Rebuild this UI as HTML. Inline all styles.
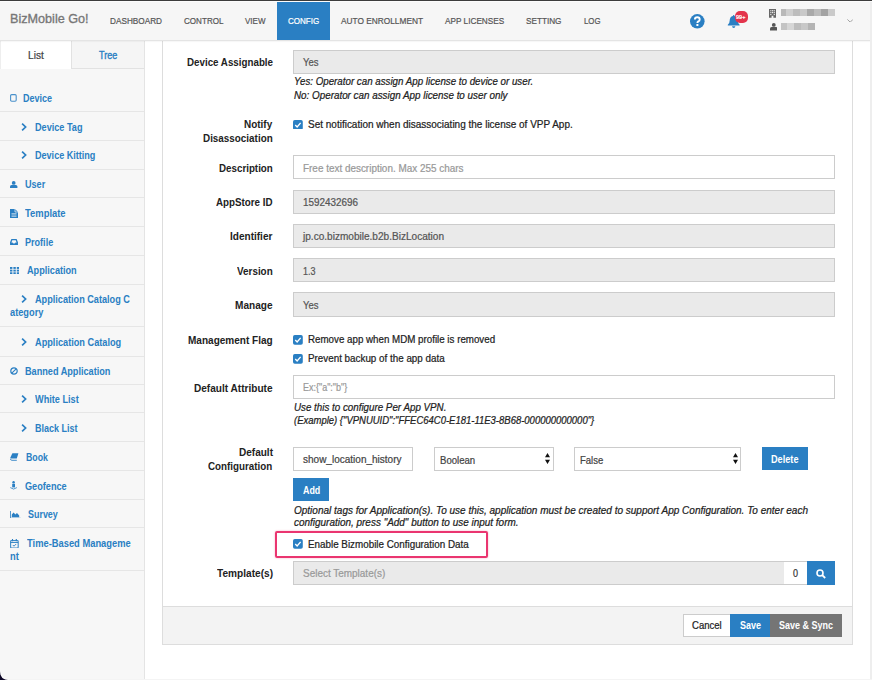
<!DOCTYPE html>
<html>
<head>
<meta charset="utf-8">
<style>
*{box-sizing:border-box;margin:0;padding:0}
html,body{width:872px;height:680px;overflow:hidden;background:#fff;font-family:"Liberation Sans",sans-serif;font-size:11px;color:#333}
#win{position:absolute;left:0;top:0;width:872px;height:680px;overflow:hidden;background:#fff}
.a{position:absolute;display:block}
.t{position:absolute;white-space:pre;line-height:1;transform-origin:0 0;z-index:7;-webkit-text-stroke:0.22px currentColor}
#topline{position:absolute;left:0;top:0;width:872px;height:1px;background:#3c3c3c;z-index:8}
#nav{position:absolute;left:0;top:0;width:872px;height:41px;background:#f6f6f6;border-bottom:1px solid #e4e4e4;z-index:5;box-shadow:0 1px 1px rgba(0,0,0,.03)}
#act{position:absolute;left:277px;top:1px;width:53px;height:39px;background:#2a7fc3}
#side{position:absolute;left:0;top:41px;width:145px;height:639px;background:#f7f7f7;border-right:1px solid #e4e4e4}
#tabL{position:absolute;left:0;top:0;width:72px;height:28px;background:#fff;border-left:1px solid #eee}
#tabT{position:absolute;left:71px;top:0;width:73px;height:28px;background:#f5f5f5;border-left:1px solid #e2e2e2;border-bottom:1px solid #e2e2e2}
.sep{position:absolute;left:0;width:144px;height:1px;background:#e6e6e6}
#panel{position:absolute;left:162px;top:30px;width:691px;height:615px;border:1px solid #ddd;background:#fff}
#foot{position:absolute;left:163px;top:606px;width:689px;height:38px;background:#f3f3f3;border-top:1px solid #ddd}
.in{position:absolute;border:1px solid #ccc}
.in.g{background:#eaeaea}
.in.w{background:#fff}
.btn{position:absolute;background:#2a7fc3}
.mos i{display:block;float:left;height:100%}
#sb{position:absolute;left:870px;top:2px;width:2px;height:678px;background:#eeeeee;z-index:8}
#pink{position:absolute;left:274.5px;top:531px;width:213.5px;height:27px;border:2px solid #ea3570;border-radius:2px;box-shadow:0 0 2px rgba(234,53,112,.45)}
</style>
</head>
<body>
<div id="win">
<div id="topline"></div>
<div id="nav"><div id="act"></div></div>

<svg class="a" style="left:690.2px;top:14px;z-index:6" width="14.6" height="14.6" viewBox="0 0 14.6 14.6"><circle cx="7.3" cy="7.3" r="7.3" fill="#2a7fc3"/><path d="M4.9 5.6 Q4.9 3.3 7.3 3.3 Q9.7 3.3 9.7 5.4 Q9.7 6.7 8.3 7.4 Q7.4 7.9 7.4 8.9" fill="none" stroke="#fff" stroke-width="1.9"/><rect x="6.4" y="10" width="2" height="2" fill="#fff"/></svg>
<svg class="a" style="left:726.7px;top:15px;z-index:6" width="13.4" height="13" viewBox="0 0 13.4 13"><path d="M6.7 0 Q7.5 0 7.5 0.9 Q10.7 1.7 10.7 5.6 Q10.7 8.6 12.6 9.8 V10.6 H0.8 V9.8 Q2.7 8.6 2.7 5.6 Q2.7 1.7 5.9 0.9 Q5.9 0 6.7 0 Z" fill="#2a7fc3"/><path d="M5 11.2 H8.4 Q8.2 13 6.7 13 Q5.2 13 5 11.2 Z" fill="#2a7fc3"/></svg>
<div class="a" style="left:734.5px;top:11.3px;width:13px;height:11.6px;border-radius:5px;background:#e3344c;z-index:6"></div>
<svg class="a" style="left:769px;top:8.8px;z-index:6" width="7" height="8.8" viewBox="0 0 7 8.8"><path d="M0 0 H7 V8.8 H4.4 V6.8 H2.6 V8.8 H0 Z" fill="#666"/><g fill="#f8f8f8"><rect x="1.3" y="1.2" width="1.1" height="1.1"/><rect x="3" y="1.2" width="1.1" height="1.1"/><rect x="4.7" y="1.2" width="1.1" height="1.1"/><rect x="1.3" y="3.1" width="1.1" height="1.1"/><rect x="3" y="3.1" width="1.1" height="1.1"/><rect x="4.7" y="3.1" width="1.1" height="1.1"/><rect x="1.3" y="5" width="1.1" height="1.1"/><rect x="4.7" y="5" width="1.1" height="1.1"/></g></svg>
<svg class="a" style="left:769.5px;top:23px;z-index:6" width="7.6" height="7.6" viewBox="0 0 7.6 7.6"><circle cx="3.8" cy="1.9" r="1.9" fill="#555"/><path d="M0 7.6 V5.6 Q0 4 1.6 4 H6 Q7.6 4 7.6 5.6 V7.6 Z" fill="#555"/></svg>
<div class="a mos" style="left:781px;top:9.3px;width:54px;height:6.8px;z-index:6"><i style="width:5px;background:#b9b9b9"></i><i style="width:7px;background:#cfcfcf"></i><i style="width:7px;background:#bdbdbd"></i><i style="width:7px;background:#c9c9c9"></i><i style="width:7px;background:#a9a9a9"></i><i style="width:7px;background:#bcbcbc"></i><i style="width:7px;background:#a3a3a3"></i><i style="width:7px;background:#cacaca"></i></div>
<div class="a mos" style="left:781px;top:23px;width:34px;height:7px;z-index:6"><i style="width:6px;background:#c4c4c4"></i><i style="width:7px;background:#d6d6d6"></i><i style="width:7px;background:#bdbdbd"></i><i style="width:7px;background:#c8c8c8"></i><i style="width:7px;background:#b4b4b4"></i></div>
<svg class="a" style="left:847px;top:18.6px;z-index:6" width="6.4" height="3.8" viewBox="0 0 6.4 3.8"><path d="M0.4 0.4 L3.2 3.2 L6 0.4" fill="none" stroke="#999" stroke-width="0.9"/></svg>

<div id="side"><div id="tabL"></div><div id="tabT"></div></div>
<div class="sep" style="top:111px"></div><div class="sep" style="top:140px"></div><div class="sep" style="top:169px"></div><div class="sep" style="top:197px"></div><div class="sep" style="top:226px"></div><div class="sep" style="top:255px"></div><div class="sep" style="top:284px"></div><div class="sep" style="top:326px"></div><div class="sep" style="top:356px"></div><div class="sep" style="top:384px"></div><div class="sep" style="top:412px"></div><div class="sep" style="top:441px"></div><div class="sep" style="top:470px"></div><div class="sep" style="top:499px"></div><div class="sep" style="top:527px"></div><div class="sep" style="top:570px"></div>

<svg class="a" style="left:9.6px;top:94px" width="7" height="8" viewBox="0 0 7 8"><rect x="0.6" y="0.6" width="5.6" height="6.6" rx="1.1" fill="none" stroke="#2a7fc3" stroke-width="1.1" opacity=".85"/></svg>
<svg class="a" style="left:20.8px;top:122.6px" width="6" height="8" viewBox="0 0 6 8"><path d="M1.1 0.7 L4.6 4 L1.1 7.3" fill="none" stroke="#2a7fc3" stroke-width="1.7"/></svg><svg class="a" style="left:20.8px;top:151.2px" width="6" height="8" viewBox="0 0 6 8"><path d="M1.1 0.7 L4.6 4 L1.1 7.3" fill="none" stroke="#2a7fc3" stroke-width="1.7"/></svg><svg class="a" style="left:20.8px;top:295px" width="6" height="8" viewBox="0 0 6 8"><path d="M1.1 0.7 L4.6 4 L1.1 7.3" fill="none" stroke="#2a7fc3" stroke-width="1.7"/></svg><svg class="a" style="left:20.8px;top:337.8px" width="6" height="8" viewBox="0 0 6 8"><path d="M1.1 0.7 L4.6 4 L1.1 7.3" fill="none" stroke="#2a7fc3" stroke-width="1.7"/></svg><svg class="a" style="left:20.8px;top:395px" width="6" height="8" viewBox="0 0 6 8"><path d="M1.1 0.7 L4.6 4 L1.1 7.3" fill="none" stroke="#2a7fc3" stroke-width="1.7"/></svg><svg class="a" style="left:20.8px;top:423.7px" width="6" height="8" viewBox="0 0 6 8"><path d="M1.1 0.7 L4.6 4 L1.1 7.3" fill="none" stroke="#2a7fc3" stroke-width="1.7"/></svg>
<svg class="a" style="left:10.4px;top:180.8px" width="7.4" height="7.6" viewBox="0 0 7.4 7.6"><circle cx="3.7" cy="1.9" r="1.9" fill="#2a7fc3"/><path d="M0 7.6 V5.6 Q0 4 1.6 4 H5.8 Q7.4 4 7.4 5.6 V7.6 Z" fill="#2a7fc3"/></svg>
<svg class="a" style="left:10.3px;top:208.9px" width="8" height="9" viewBox="0 0 8 9"><path d="M0 0 H5 L8 3 V9 H0 Z" fill="#2a7fc3"/><path d="M5 0 V3 H8" fill="none" stroke="#f8f8f8" stroke-width="0.7"/><path d="M1.5 4.6H6.5M1.5 6H6.5M1.5 7.4H6.5" stroke="#f8f8f8" stroke-width="0.6"/></svg>
<svg class="a" style="left:10.3px;top:239px" width="8" height="6.2" viewBox="0 0 8 6.2"><path d="M0.7 5.5 V3.4 L1.8 0.7 H6.2 L7.3 3.4 V5.5 Z" fill="none" stroke="#2a7fc3" stroke-width="1.3"/><path d="M0.7 3.6 H2.6 L3 4.4 H5 L5.4 3.6 H7.3 V5.6 H0.7 Z" fill="#2a7fc3"/></svg>
<svg class="a" style="left:10.3px;top:266.9px" width="9.2" height="7.2" viewBox="0 0 9.2 7.2"><g fill="#2a7fc3"><rect x="0" y="0" width="2.4" height="1.9"/><rect x="3.4" y="0" width="2.4" height="1.9"/><rect x="6.8" y="0" width="2.4" height="1.9"/><rect x="0" y="2.65" width="2.4" height="1.9"/><rect x="3.4" y="2.65" width="2.4" height="1.9"/><rect x="6.8" y="2.65" width="2.4" height="1.9"/><rect x="0" y="5.3" width="2.4" height="1.9"/><rect x="3.4" y="5.3" width="2.4" height="1.9"/><rect x="6.8" y="5.3" width="2.4" height="1.9"/></g></svg>
<svg class="a" style="left:10.3px;top:367px" width="8" height="8" viewBox="0 0 8 8"><circle cx="4" cy="4" r="3.2" fill="none" stroke="#2a7fc3" stroke-width="1.2"/><path d="M1.8 6.2 L6.2 1.8" stroke="#2a7fc3" stroke-width="1.1"/></svg>
<svg class="a" style="left:10.3px;top:453px" width="8.6" height="7.8" viewBox="0 0 8.6 7.8"><path d="M2.4 0.2 H8.4 L6.8 5.6 H1 Q0 5.6 0.4 4.6 Z" fill="#2a7fc3"/><path d="M0.5 5.8 Q0.5 7.3 1.8 7.3 H6.8" fill="none" stroke="#2a7fc3" stroke-width="0.9"/></svg>
<svg class="a" style="left:10.3px;top:481.3px" width="7.2" height="8.8" viewBox="0 0 7.2 8.8"><circle cx="3.6" cy="1.2" r="1.2" fill="#2a7fc3"/><path d="M2.2 2.8 H5 V6.4 H2.2 Z" fill="#2a7fc3"/><path d="M0.3 6.6 Q3.6 9.6 6.9 6.6" fill="none" stroke="#2a7fc3" stroke-width="1" opacity=".8"/></svg>
<svg class="a" style="left:9.9px;top:510.7px" width="10.8" height="7.8" viewBox="0 0 10.8 7.8"><path d="M0.5 0 V7.3 H10.8" fill="none" stroke="#2a7fc3" stroke-width="1" opacity=".8"/><path d="M1.8 6.2 V3.6 L3.6 1.4 L5.4 3.4 L7 2 L9.2 4.4 V6.2 Z" fill="#2a7fc3"/></svg>
<svg class="a" style="left:10.3px;top:538.5px" width="8.8" height="9.6" viewBox="0 0 8.8 9.6"><rect x="0.6" y="1.5" width="7.6" height="7.5" rx="0.9" fill="none" stroke="#2a7fc3" stroke-width="1.1" opacity=".9"/><path d="M0.6 3.4 H8.2" stroke="#2a7fc3" stroke-width="1"/><path d="M2.5 0 V2.2 M6.3 0 V2.2" stroke="#2a7fc3" stroke-width="1.1"/><path d="M2.8 6 L4 7.2 L6.2 5" fill="none" stroke="#2a7fc3" stroke-width="0.9"/></svg>

<div id="panel"></div>
<div id="foot"></div>
<div id="sb"></div>
<svg class="a" style="left:0;top:671px;z-index:9" width="9" height="9" viewBox="0 0 9 9"><path d="M0 0 Q0.2 8.8 8.2 9 L0 9 Z" fill="#0d0726"/><path d="M0.6 0 Q0.9 8.2 8.8 8.6" fill="none" stroke="#fff" stroke-width="0.8" opacity=".7"/></svg>
<div class="a" style="left:0;top:1px;width:872px;height:1px;background:#fcfcfc;z-index:8"></div>
<div class="a" style="left:0;top:679px;width:872px;height:1px;background:#f4f4f4;z-index:8"></div>
<div class="in g" style="left:293px;top:50px;width:542px;height:24px"></div><div class="in w" style="left:293px;top:155px;width:542px;height:24px"></div><div class="in g" style="left:293px;top:190px;width:542px;height:24px"></div><div class="in g" style="left:293px;top:224px;width:542px;height:24px"></div><div class="in g" style="left:293px;top:258px;width:542px;height:24px"></div><div class="in g" style="left:293px;top:292px;width:542px;height:25px"></div><div class="in w" style="left:293px;top:375px;width:542px;height:24px"></div>
<svg class="a" style="left:293.2px;top:119.7px" width="9.8" height="9.8" viewBox="0 0 10 10"><rect x="0" y="0" width="10" height="10" rx="1.8" fill="#2a7fc3"/><path d="M2.3 5.2 L4.2 7.1 L7.8 2.9" fill="none" stroke="#fff" stroke-width="1.4"/></svg><svg class="a" style="left:293.2px;top:334.9px" width="9.8" height="9.8" viewBox="0 0 10 10"><rect x="0" y="0" width="10" height="10" rx="1.8" fill="#2a7fc3"/><path d="M2.3 5.2 L4.2 7.1 L7.8 2.9" fill="none" stroke="#fff" stroke-width="1.4"/></svg><svg class="a" style="left:293.2px;top:353.8px" width="9.8" height="9.8" viewBox="0 0 10 10"><rect x="0" y="0" width="10" height="10" rx="1.8" fill="#2a7fc3"/><path d="M2.3 5.2 L4.2 7.1 L7.8 2.9" fill="none" stroke="#fff" stroke-width="1.4"/></svg><svg class="a" style="left:293.3px;top:539.4px" width="9.8" height="9.8" viewBox="0 0 10 10"><rect x="0" y="0" width="10" height="10" rx="1.8" fill="#2a7fc3"/><path d="M2.3 5.2 L4.2 7.1 L7.8 2.9" fill="none" stroke="#fff" stroke-width="1.4"/></svg>
<div class="in w" style="left:293px;top:447px;width:120px;height:24px"></div><div class="in w" style="left:434px;top:447px;width:120px;height:24px"></div><div class="in w" style="left:574px;top:447px;width:167px;height:24px"></div>
<svg class="a" style="left:545.2px;top:453.3px" width="5" height="11" viewBox="0 0 5 11"><path d="M2.5 0 L5 4.2 H0 Z M2.5 11 L5 6.8 H0 Z" fill="#111"/></svg><svg class="a" style="left:732.7px;top:453.3px" width="5" height="11" viewBox="0 0 5 11"><path d="M2.5 0 L5 4.2 H0 Z M2.5 11 L5 6.8 H0 Z" fill="#111"/></svg>
<div class="btn" style="left:762px;top:447px;width:46px;height:23px"></div>
<div class="btn" style="left:293px;top:478px;width:36px;height:23px"></div>
<div id="pink"></div>
<div class="in g" style="left:293px;top:561px;width:492px;height:24px"></div>
<div class="in w" style="left:784px;top:561px;width:24px;height:24px;border-left:0"></div>
<div class="btn" style="left:807px;top:561px;width:28px;height:24px"></div>
<svg class="a" style="left:816.2px;top:569.2px" width="10" height="9.6" viewBox="0 0 10 9.6"><circle cx="4" cy="4" r="3" fill="none" stroke="#fff" stroke-width="1.6"/><path d="M6.2 6.2 L9.2 9" stroke="#fff" stroke-width="1.8"/></svg>
<div class="in w" style="left:683px;top:614px;width:48px;height:23px"></div>
<div class="btn" style="left:730px;top:614px;width:40px;height:23px"></div>
<div class="btn" style="left:770px;top:614px;width:72px;height:23px;background:#757575"></div>
<span class="t" style="left:9.90px;top:12px;font-size:13.5px;color:#777;transform:scaleX(0.9352);-webkit-text-stroke:0.35px currentColor;">BizMobile Go!</span>
<span class="t" style="left:110.00px;top:16px;font-size:9.8px;color:#555;transform:scaleX(0.8379);">DASHBOARD</span>
<span class="t" style="left:183.50px;top:16px;font-size:9.8px;color:#555;transform:scaleX(0.8245);">CONTROL</span>
<span class="t" style="left:245.00px;top:16px;font-size:9.8px;color:#555;transform:scaleX(0.8185);">VIEW</span>
<span class="t" style="left:287.75px;top:16px;font-size:9.8px;color:#fff;transform:scaleX(0.8200);">CONFIG</span>
<span class="t" style="left:341.00px;top:16px;font-size:9.8px;color:#555;transform:scaleX(0.8478);">AUTO ENROLLMENT</span>
<span class="t" style="left:444.75px;top:16px;font-size:9.8px;color:#555;transform:scaleX(0.8391);">APP LICENSES</span>
<span class="t" style="left:526.25px;top:16px;font-size:9.8px;color:#555;transform:scaleX(0.8359);">SETTING</span>
<span class="t" style="left:583.75px;top:16px;font-size:9.8px;color:#555;transform:scaleX(0.7970);">LOG</span>
<span class="t" style="left:28.30px;top:50px;font-size:10.5px;color:#444;transform:scaleX(0.9667);">List</span>
<span class="t" style="left:99.40px;top:50px;font-size:10.5px;color:#2a7fc3;transform:scaleX(0.8584);-webkit-text-stroke:0.4px currentColor;">Tree</span>
<span class="t" style="left:23.40px;top:94px;font-size:10.3px;color:#2a7fc3;transform:scaleX(0.8730);font-weight:bold;-webkit-text-stroke:0;">Device</span>
<span class="t" style="left:34.70px;top:123px;font-size:10.3px;color:#2a7fc3;transform:scaleX(0.8860);font-weight:bold;-webkit-text-stroke:0;">Device Tag</span>
<span class="t" style="left:34.70px;top:151px;font-size:10.3px;color:#2a7fc3;transform:scaleX(0.8795);font-weight:bold;-webkit-text-stroke:0;">Device Kitting</span>
<span class="t" style="left:24.60px;top:180px;font-size:10.3px;color:#2a7fc3;transform:scaleX(0.8819);font-weight:bold;-webkit-text-stroke:0;">User</span>
<span class="t" style="left:25.40px;top:209px;font-size:10.3px;color:#2a7fc3;transform:scaleX(0.9133);font-weight:bold;-webkit-text-stroke:0;">Template</span>
<span class="t" style="left:25.40px;top:238px;font-size:10.3px;color:#2a7fc3;transform:scaleX(0.8800);font-weight:bold;-webkit-text-stroke:0;">Profile</span>
<span class="t" style="left:26.60px;top:266px;font-size:10.3px;color:#2a7fc3;transform:scaleX(0.8865);font-weight:bold;-webkit-text-stroke:0;">Application</span>
<span class="t" style="left:34.60px;top:295px;font-size:10.3px;color:#2a7fc3;transform:scaleX(0.8870);font-weight:bold;-webkit-text-stroke:0;">Application Catalog C</span>
<span class="t" style="left:10.30px;top:308px;font-size:10.3px;color:#2a7fc3;transform:scaleX(0.8978);font-weight:bold;-webkit-text-stroke:0;">ategory</span>
<span class="t" style="left:34.60px;top:338px;font-size:10.3px;color:#2a7fc3;transform:scaleX(0.8915);font-weight:bold;-webkit-text-stroke:0;">Application Catalog</span>
<span class="t" style="left:25.40px;top:367px;font-size:10.3px;color:#2a7fc3;transform:scaleX(0.8867);font-weight:bold;-webkit-text-stroke:0;">Banned Application</span>
<span class="t" style="left:34.60px;top:395px;font-size:10.3px;color:#2a7fc3;transform:scaleX(0.8882);font-weight:bold;-webkit-text-stroke:0;">White List</span>
<span class="t" style="left:34.60px;top:424px;font-size:10.3px;color:#2a7fc3;transform:scaleX(0.8735);font-weight:bold;-webkit-text-stroke:0;">Black List</span>
<span class="t" style="left:26.20px;top:453px;font-size:10.3px;color:#2a7fc3;transform:scaleX(0.8505);font-weight:bold;-webkit-text-stroke:0;">Book</span>
<span class="t" style="left:25.00px;top:482px;font-size:10.3px;color:#2a7fc3;transform:scaleX(0.8884);font-weight:bold;-webkit-text-stroke:0;">Geofence</span>
<span class="t" style="left:27.80px;top:510px;font-size:10.3px;color:#2a7fc3;transform:scaleX(0.8673);font-weight:bold;-webkit-text-stroke:0;">Survey</span>
<span class="t" style="left:26.60px;top:539px;font-size:10.3px;color:#2a7fc3;transform:scaleX(0.9075);font-weight:bold;-webkit-text-stroke:0;">Time-Based Manageme</span>
<span class="t" style="left:10.30px;top:552px;font-size:10.3px;color:#2a7fc3;transform:scaleX(0.9055);font-weight:bold;-webkit-text-stroke:0;">nt</span>
<span class="t" style="left:186.60px;top:57px;font-size:10.6px;color:#222;transform:scaleX(0.9224);font-weight:bold;-webkit-text-stroke:0;">Device Assignable</span>
<span class="t" style="left:244.40px;top:119px;font-size:10.6px;color:#222;transform:scaleX(0.9395);font-weight:bold;-webkit-text-stroke:0;">Notify</span>
<span class="t" style="left:202.90px;top:133px;font-size:10.6px;color:#222;transform:scaleX(0.9321);font-weight:bold;-webkit-text-stroke:0;">Disassociation</span>
<span class="t" style="left:218.80px;top:163px;font-size:10.6px;color:#222;transform:scaleX(0.9231);font-weight:bold;-webkit-text-stroke:0;">Description</span>
<span class="t" style="left:216.10px;top:197px;font-size:10.6px;color:#222;transform:scaleX(0.9229);font-weight:bold;-webkit-text-stroke:0;">AppStore ID</span>
<span class="t" style="left:230.20px;top:231px;font-size:10.6px;color:#222;transform:scaleX(0.9478);font-weight:bold;-webkit-text-stroke:0;">Identifier</span>
<span class="t" style="left:236.90px;top:266px;font-size:10.6px;color:#222;transform:scaleX(0.9326);font-weight:bold;-webkit-text-stroke:0;">Version</span>
<span class="t" style="left:235.10px;top:300px;font-size:10.6px;color:#222;transform:scaleX(0.9505);font-weight:bold;-webkit-text-stroke:0;">Manage</span>
<span class="t" style="left:187.90px;top:335px;font-size:10.6px;color:#222;transform:scaleX(0.9465);font-weight:bold;-webkit-text-stroke:0;">Management Flag</span>
<span class="t" style="left:194.10px;top:383px;font-size:10.6px;color:#222;transform:scaleX(0.9504);font-weight:bold;-webkit-text-stroke:0;">Default Attribute</span>
<span class="t" style="left:238.60px;top:447px;font-size:10.6px;color:#222;transform:scaleX(0.9469);font-weight:bold;-webkit-text-stroke:0;">Default</span>
<span class="t" style="left:208.40px;top:461px;font-size:10.6px;color:#222;transform:scaleX(0.9246);font-weight:bold;-webkit-text-stroke:0;">Configuration</span>
<span class="t" style="left:216.60px;top:568px;font-size:10.6px;color:#222;transform:scaleX(0.9545);font-weight:bold;-webkit-text-stroke:0;">Template(s)</span>
<span class="t" style="left:302.50px;top:58px;font-size:10.2px;color:#555;transform:scaleX(0.9323);">Yes</span>
<span class="t" style="left:302.50px;top:164px;font-size:10.2px;color:#999;transform:scaleX(0.9740);">Free text description. Max 255 chars</span>
<span class="t" style="left:302.50px;top:198px;font-size:10.2px;color:#555;transform:scaleX(0.9705);">1592432696</span>
<span class="t" style="left:302.50px;top:232px;font-size:10.2px;color:#555;transform:scaleX(0.9880);">jp.co.bizmobile.b2b.BizLocation</span>
<span class="t" style="left:302.50px;top:267px;font-size:10.2px;color:#555;transform:scaleX(0.8820);">1.3</span>
<span class="t" style="left:302.50px;top:301px;font-size:10.2px;color:#555;transform:scaleX(0.9323);">Yes</span>
<span class="t" style="left:302.60px;top:383px;font-size:10.2px;color:#999;transform:scaleX(0.8812);">Ex:{&quot;a&quot;:&quot;b&quot;}</span>
<span class="t" style="left:302.50px;top:455px;font-size:10.2px;color:#444;transform:scaleX(0.9827);">show_location_history</span>
<span class="t" style="left:439.80px;top:456px;font-size:10.2px;color:#444;transform:scaleX(0.9414);">Boolean</span>
<span class="t" style="left:580.40px;top:456px;font-size:10.2px;color:#444;transform:scaleX(0.9349);">False</span>
<span class="t" style="left:302.50px;top:569px;font-size:10.2px;color:#999;transform:scaleX(0.9776);">Select Template(s)</span>
<span class="t" style="left:793.00px;top:569px;font-size:10.2px;color:#333;transform:scaleX(0.8815);">0</span>
<span class="t" style="left:308.00px;top:120px;font-size:10.2px;color:#222;transform:scaleX(0.9807);">Set notification when disassociating the license of VPP App.</span>
<span class="t" style="left:307.70px;top:335px;font-size:10.2px;color:#222;transform:scaleX(0.9578);">Remove app when MDM profile is removed</span>
<span class="t" style="left:307.70px;top:354px;font-size:10.2px;color:#222;transform:scaleX(0.9653);">Prevent backup of the app data</span>
<span class="t" style="left:307.70px;top:540px;font-size:10.2px;color:#222;transform:scaleX(0.9652);">Enable Bizmobile Configuration Data</span>
<span class="t" style="left:294.00px;top:77px;font-size:10px;color:#222;transform:scaleX(0.9745);font-style:italic;">Yes: Operator can assign App license to device or user.</span>
<span class="t" style="left:294.00px;top:91px;font-size:10px;color:#222;transform:scaleX(0.9840);font-style:italic;">No: Operator can assign App license to user only</span>
<span class="t" style="left:294.00px;top:403px;font-size:10px;color:#222;transform:scaleX(0.9780);font-style:italic;">Use this to configure Per App VPN.</span>
<span class="t" style="left:294.00px;top:416px;font-size:10px;color:#222;transform:scaleX(0.9488);font-style:italic;">(Example) {&quot;VPNUUID&quot;:&quot;FFEC64C0-E181-11E3-8B68-000000000000&quot;}</span>
<span class="t" style="left:294.00px;top:506px;font-size:10px;color:#222;transform:scaleX(1.0003);font-style:italic;">Optional tags for Application(s). To use this, application must be created to support App Configuration. To enter each</span>
<span class="t" style="left:294.00px;top:518px;font-size:10px;color:#222;transform:scaleX(0.9953);font-style:italic;">configuration, press &quot;Add&quot; button to use input form.</span>
<span class="t" style="left:771.40px;top:455px;font-size:10.3px;color:#fff;transform:scaleX(0.8898);font-weight:bold;-webkit-text-stroke:0;">Delete</span>
<span class="t" style="left:302.50px;top:486px;font-size:10.3px;color:#fff;transform:scaleX(0.8643);font-weight:bold;-webkit-text-stroke:0;">Add</span>
<span class="t" style="left:692.10px;top:621px;font-size:10.3px;color:#222;transform:scaleX(0.9263);">Cancel</span>
<span class="t" style="left:739.70px;top:621px;font-size:10.3px;color:#fff;transform:scaleX(0.8727);font-weight:bold;-webkit-text-stroke:0;">Save</span>
<span class="t" style="left:778.60px;top:621px;font-size:10.3px;color:#fff;transform:scaleX(0.8734);font-weight:bold;-webkit-text-stroke:0;">Save &amp; Sync</span>
<span class="t" style="left:736.40px;top:15px;font-size:5.5px;color:#fff;transform:scaleX(1.0060);">99+</span>
</div>
</body>
</html>
